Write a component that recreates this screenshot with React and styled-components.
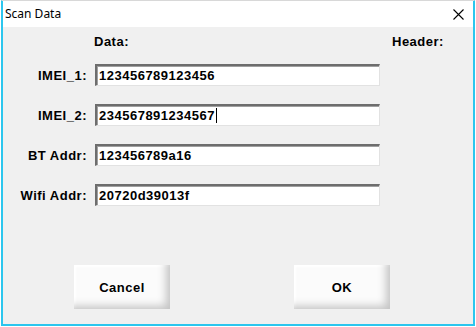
import React from 'react'
import styled, { createGlobalStyle } from 'styled-components'

const Global = createGlobalStyle`
  html, body {
    margin: 0;
    padding: 0;
    background: #fff;
  }
`;

const Window = styled.div`
    width: 472px;
    height: 324px;
    margin-left: 1px;
    border: 1px solid #2cc6ee;
    border-top-color: #d8d8d8;
    background: #f0f0f0;
    display: flex;
    flex-direction: column;
    box-shadow: inset 1px 0 0 #2cc6ee, inset -1px 0 0 #2cc6ee, inset 0 -1px 0 #2cc6ee;
`;

const TitleBar = styled.div`
    height: 26px;
    background: #fff;
    margin: 0 1px;
    display: flex;
    align-items: center;
    justify-content: space-between;
    padding-left: 2px;
`;

const Title = styled.span`
    font-family: "Noto Sans", "Open Sans", sans-serif;
    font-size: 12px;
    color: #000;
    margin-top: -1px;
`;

const CloseBtn = styled.div`
    width: 30px;
    height: 26px;
    display: flex;
    align-items: center;
    justify-content: center;
`;

const Body = styled.div`
    flex: 1;
    padding: 4px 0 0 0;
    display: flex;
    flex-direction: column;
    font-family: "Liberation Sans", Arial, sans-serif;
    font-weight: bold;
    font-size: 13px;
    letter-spacing: 0.5px;
    color: #000;
`;

const HeadRow = styled.div`
    display: grid;
    grid-template-columns: 92px 298px auto;
    height: 20px;
    align-items: center;
`;

const HeadLabel = styled.div`
    grid-column: ${p => p.col};
`;

const Rows = styled.div`
    display: flex;
    flex-direction: column;
    gap: 18px;
    margin-top: 13px;
`;

const Row = styled.div`
    display: grid;
    grid-template-columns: 85px 285px;
    column-gap: 8px;
    align-items: center;
    height: 22px;
`;

const Label = styled.label`
    text-align: right;
`;

const Field = styled.div`
    height: 22px;
    box-sizing: border-box;
    background: #fff;
    border-top: 2px solid #6d6d6d;
    border-left: 2px solid #6d6d6d;
    border-right: 1px solid #e2e2e2;
    border-bottom: 1px solid #e2e2e2;
    box-shadow: inset 1px 1px 0 #a0a0a0;
    display: flex;
    align-items: center;
    padding-left: 2px;
    white-space: nowrap;
`;

const Caret = styled.span`
    display: inline-block;
    width: 1px;
    height: 15px;
    background: #000;
    margin-left: 1px;
    vertical-align: middle;
`;

const Buttons = styled.div`
    display: flex;
    gap: 124px;
    padding-left: 72px;
    margin-top: 59px;
`;

const Button = styled.div`
    width: 96px;
    height: 44px;
    background: #fbfbfb;
    box-shadow: inset -7px -6px 8px -3px rgba(0,0,0,0.22), inset 2px 2px 2px #fff;
    display: flex;
    align-items: center;
    justify-content: center;
    font-size: 13px;
`;

const fields = [
    { label: 'IMEI_1:', value: '123456789123456' },
    { label: 'IMEI_2:', value: '234567891234567', caret: true },
    { label: 'BT Addr:', value: '123456789a16' },
    { label: 'Wifi Addr:', value: '20720d39013f' },
]

export default function App() {
    return (
        <>
            <Global />
            <Window>
                <TitleBar>
                    <Title>Scan Data</Title>
                    <CloseBtn>
                        <svg width="11" height="11" viewBox="0 0 11 11">
                            <path d="M0.5 0.5 L10.5 10.5 M10.5 0.5 L0.5 10.5" stroke="#000" strokeWidth="1.1" />
                        </svg>
                    </CloseBtn>
                </TitleBar>
                <Body>
                    <HeadRow>
                        <HeadLabel col={2}>Data:</HeadLabel>
                        <HeadLabel col={3}>Header:</HeadLabel>
                    </HeadRow>
                    <Rows>
                        {fields.map(f => (
                            <Row key={f.label}>
                                <Label>{f.label}</Label>
                                <Field>
                                    {f.value}
                                    {f.caret && <Caret />}
                                </Field>
                            </Row>
                        ))}
                    </Rows>
                    <Buttons>
                        <Button>Cancel</Button>
                        <Button>OK</Button>
                    </Buttons>
                </Body>
            </Window>
        </>
    )
}
